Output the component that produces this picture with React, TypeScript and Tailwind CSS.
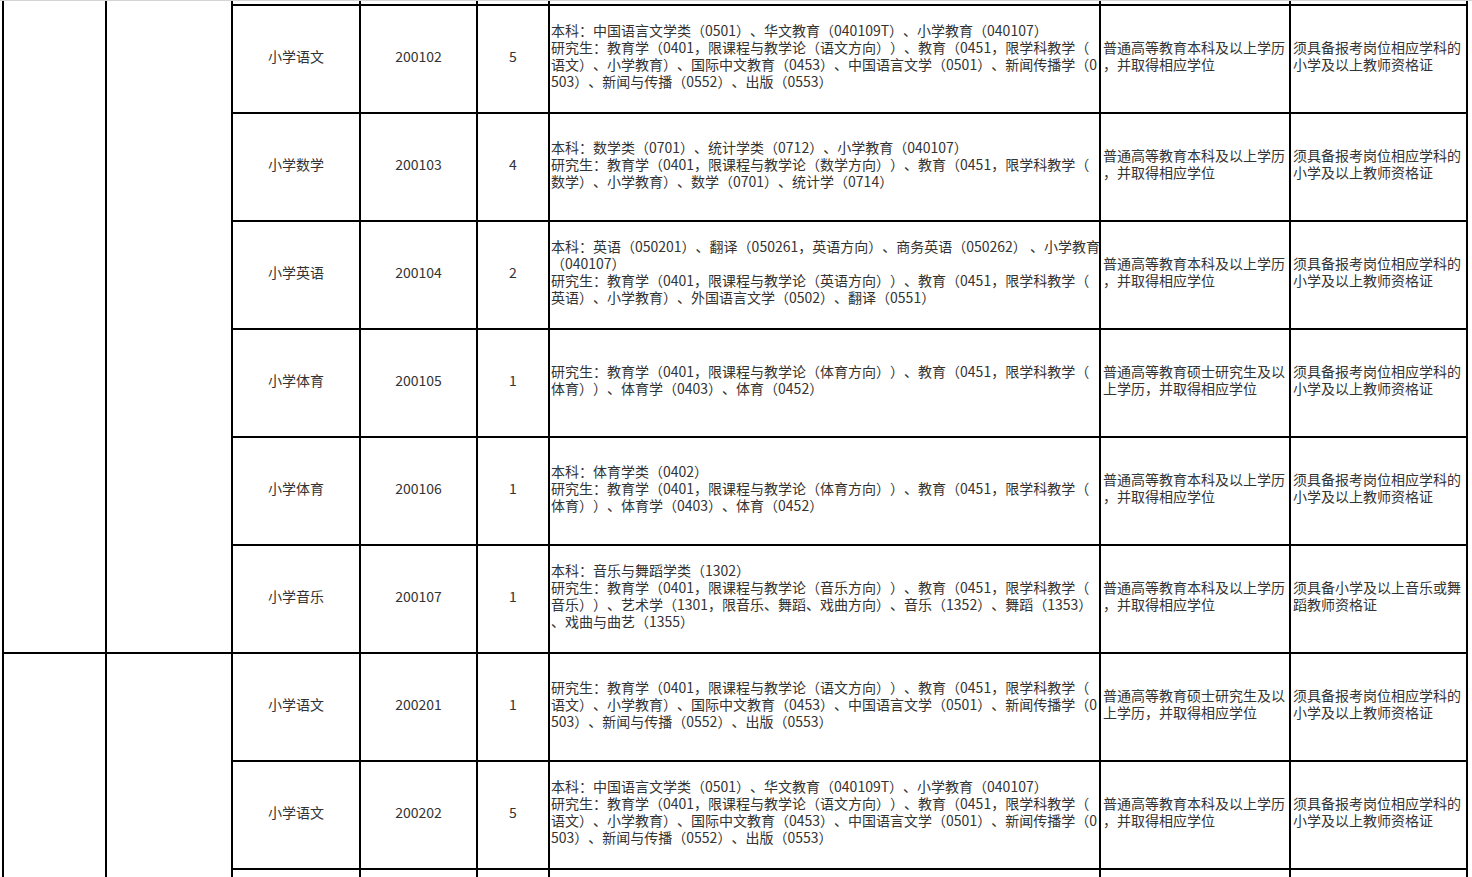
import React from "react";

type Row = {
  name: string;
  code: string;
  num: string;
  major: string[];
  edu: string[];
  cert: string[];
};

const EDU_BK = ["普通高等教育本科及以上学历", "，并取得相应学位"];
const EDU_SS = ["普通高等教育硕士研究生及以", "上学历，并取得相应学位"];
const CERT = ["须具备报考岗位相应学科的", "小学及以上教师资格证"];

const YUWEN_BK = [
  "本科：中国语言文学类（0501）、华文教育（040109T）、小学教育（040107）",
  "研究生：教育学（0401，限课程与教学论（语文方向））、教育（0451，限学科教学（",
  "语文）、小学教育）、国际中文教育（0453）、中国语言文学（0501）、新闻传播学（0",
  "503）、新闻与传播（0552）、出版（0553）",
];

const rows: Row[] = [
  { name: "小学语文", code: "200102", num: "5", major: YUWEN_BK, edu: EDU_BK, cert: CERT },
  {
    name: "小学数学",
    code: "200103",
    num: "4",
    major: [
      "本科：数学类（0701）、统计学类（0712）、小学教育（040107）",
      "研究生：教育学（0401，限课程与教学论（数学方向））、教育（0451，限学科教学（",
      "数学）、小学教育）、数学（0701）、统计学（0714）",
    ],
    edu: EDU_BK,
    cert: CERT,
  },
  {
    name: "小学英语",
    code: "200104",
    num: "2",
    major: [
      "本科：英语（050201）、翻译（050261，英语方向）、商务英语（050262） 、小学教育",
      "（040107）",
      "研究生：教育学（0401，限课程与教学论（英语方向））、教育（0451，限学科教学（",
      "英语）、小学教育）、外国语言文学（0502）、翻译（0551）",
    ],
    edu: EDU_BK,
    cert: CERT,
  },
  {
    name: "小学体育",
    code: "200105",
    num: "1",
    major: [
      "研究生：教育学（0401，限课程与教学论（体育方向））、教育（0451，限学科教学（",
      "体育））、体育学（0403）、体育（0452）",
    ],
    edu: EDU_SS,
    cert: CERT,
  },
  {
    name: "小学体育",
    code: "200106",
    num: "1",
    major: [
      "本科：体育学类（0402）",
      "研究生：教育学（0401，限课程与教学论（体育方向））、教育（0451，限学科教学（",
      "体育））、体育学（0403）、体育（0452）",
    ],
    edu: EDU_BK,
    cert: CERT,
  },
  {
    name: "小学音乐",
    code: "200107",
    num: "1",
    major: [
      "本科：音乐与舞蹈学类（1302）",
      "研究生：教育学（0401，限课程与教学论（音乐方向））、教育（0451，限学科教学（",
      "音乐））、艺术学（1301，限音乐、舞蹈、戏曲方向）、音乐（1352）、舞蹈（1353）",
      "、戏曲与曲艺（1355）",
    ],
    edu: EDU_BK,
    cert: ["须具备小学及以上音乐或舞", "蹈教师资格证"],
  },
  {
    name: "小学语文",
    code: "200201",
    num: "1",
    major: [
      "研究生：教育学（0401，限课程与教学论（语文方向））、教育（0451，限学科教学（",
      "语文）、小学教育）、国际中文教育（0453）、中国语言文学（0501）、新闻传播学（0",
      "503）、新闻与传播（0552）、出版（0553）",
    ],
    edu: EDU_SS,
    cert: CERT,
  },
  { name: "小学语文", code: "200202", num: "5", major: YUWEN_BK, edu: EDU_BK, cert: CERT },
];

function Center({ children }: { children: React.ReactNode }) {
  return (
    <div className="bg-white flex items-center justify-center pb-[6px] whitespace-nowrap overflow-hidden">
      {children}
    </div>
  );
}

function Lines({ lines, pad }: { lines: string[]; pad: string }) {
  return (
    <div className={`bg-white flex flex-col justify-center pb-[6px] overflow-hidden ${pad}`}>
      {lines.map((l, i) => (
        <div key={i} className="whitespace-pre leading-[17px] h-[17px]">
          {l}
        </div>
      ))}
    </div>
  );
}

export default function App() {
  return (
    <div
      className="w-[1472px] h-[877px] overflow-hidden bg-white text-[14px] text-[#333] [text-spacing-trim:space-all]"
      style={{ fontFamily: '"Noto Sans CJK SC", "Microsoft YaHei", "Noto Sans", sans-serif' }}
    >
      <div className="h-px bg-[#d4d4d4]" />
      <div className="pl-[2px]">
        <div className="w-[1466px] bg-black px-[2px] grid gap-[2px] grid-cols-[101px_124px_126px_115px_70px_549px_188px_175px] grid-rows-[3px_repeat(8,106px)_7px]">
          {/* merged first group */}
          <div className="bg-white row-span-7 col-start-1 row-start-1" />
          <div className="bg-white row-span-7 col-start-2 row-start-1" />
          {/* partial top row */}
          <div className="bg-white col-start-3 row-start-1" />
          <div className="bg-white col-start-4 row-start-1" />
          <div className="bg-white col-start-5 row-start-1" />
          <div className="bg-white col-start-6 row-start-1" />
          <div className="bg-white col-start-7 row-start-1" />
          <div className="bg-white col-start-8 row-start-1" />
          {/* merged second group */}
          <div className="bg-white row-span-3 col-start-1 row-start-8" />
          <div className="bg-white row-span-3 col-start-2 row-start-8" />
          {rows.map((r, i) => (
            <React.Fragment key={i}>
              <Center>{r.name}</Center>
              <Center>{r.code}</Center>
              <Center>{r.num}</Center>
              <Lines lines={r.major} pad="pl-[1px]" />
              <Lines lines={r.edu} pad="pl-[2px]" />
              <Lines lines={r.cert} pad="pl-[2px]" />
            </React.Fragment>
          ))}
          {/* partial bottom row */}
          <div className="bg-white col-start-3" />
          <div className="bg-white col-start-4" />
          <div className="bg-white col-start-5" />
          <div className="bg-white col-start-6" />
          <div className="bg-white col-start-7" />
          <div className="bg-white col-start-8" />
        </div>
      </div>
    </div>
  );
}
